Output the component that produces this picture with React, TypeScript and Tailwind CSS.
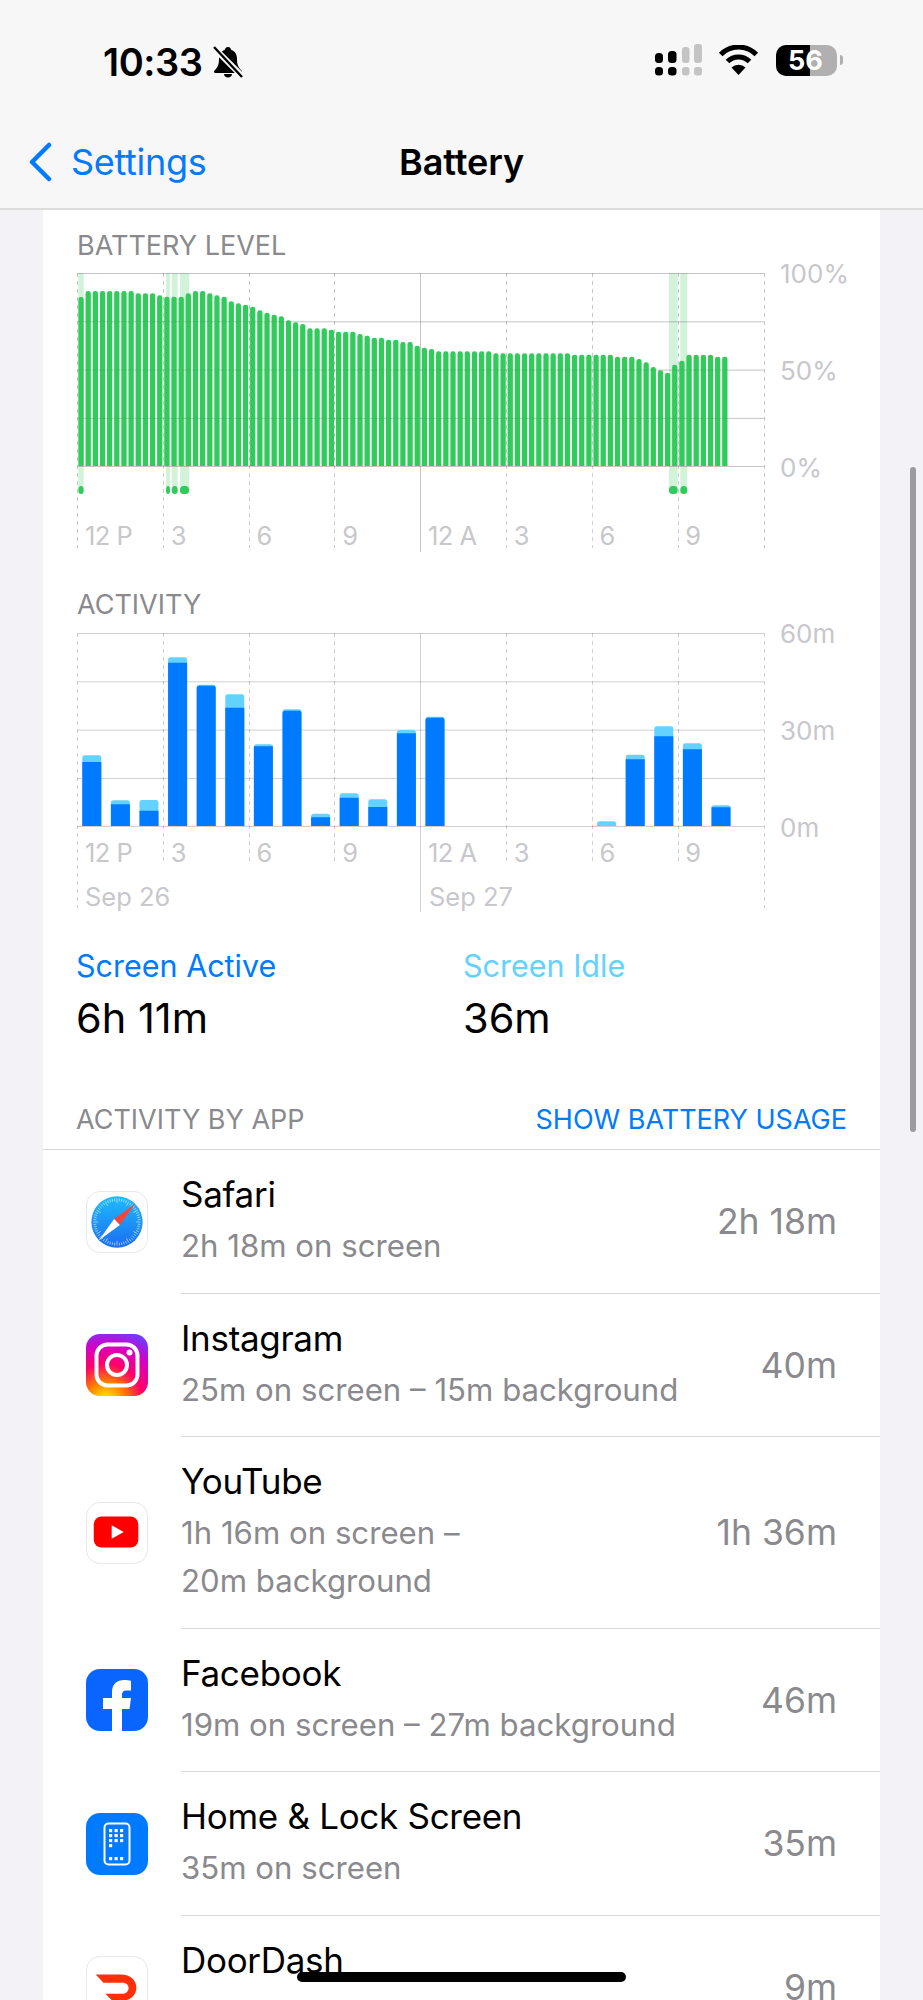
const SANS = "font-['Inter','Noto_Sans',sans-serif]";

const battTops = [
  230, 212, 212, 212, 212, 212, 212, 212, 219, 219, 219, 225, 229, 229, 229, 219, 212, 212, 219, 225, 229, 243, 249,
  253, 259, 270, 277, 283, 288, 300, 306, 311, 324, 324, 324, 328, 334, 334, 334, 341, 346, 352, 352, 358, 358, 365,
  365, 376, 382, 386, 393, 393, 393, 393, 393, 393, 393, 393, 399, 399, 399, 399, 399, 399, 399, 399, 399, 399, 399,
  403, 403, 403, 403, 403, 403, 409, 409, 409, 416, 426, 440, 450, 457, 433, 421, 403, 403, 403, 403, 409, 409,
];

const activity: [number, number, number][] = [
  [0, 525, 545],
  [1, 660, 672],
  [2, 659, 691],
  [3, 231, 247],
  [4, 313, 316],
  [5, 342, 382],
  [6, 492, 498],
  [7, 387, 391],
  [8, 700, 711],
  [9, 639, 652],
  [10, 657, 680],
  [11, 449, 459],
  [12, 409, 412],
  [18, 723, 738],
  [19, 523, 537],
  [20, 438, 468],
  [21, 489, 507],
  [22, 675, 681],
];

const bands = [
  [1.3, 6.7],
  [89, 93],
  [94.7, 100.7],
  [103, 112],
  [592, 600.7],
  [603.3, 610.3],
];

function topBar(x: number, y: number, w: number, h: number, r: number) {
  return `M${x} ${y + h}V${y + r}Q${x} ${y} ${x + r} ${y}H${x + w - r}Q${x + w} ${y} ${x + w} ${y + r}V${y + h}Z`;
}

function Grid({ dashEnd }: { dashEnd: number }) {
  const line = "rgba(60,60,67,0.24)";
  return (
    <g>
      {[0, 48.3, 96.6, 144.9, 193].map((y) => (
        <line key={y} x1="0.5" x2="687" y1={y + 0.5} y2={y + 0.5} stroke={line} strokeWidth="1" />
      ))}
      {[1, 2, 3, 5, 6, 7].map((i) => (
        <line
          key={i}
          x1={Math.round(i * 85.8) + 0.5}
          x2={Math.round(i * 85.8) + 0.5}
          y1="0"
          y2={dashEnd}
          stroke={line}
          strokeWidth="1"
          strokeDasharray="4 4"
        />
      ))}
      <line x1="687.5" x2="687.5" y1="0" y2="275" stroke={line} strokeWidth="1" strokeDasharray="4 4" />
      <line x1="0.5" x2="0.5" y1="0" y2="275" stroke={line} strokeWidth="1" strokeDasharray="4 4" />
      <line x1="343.5" x2="343.5" y1="0" y2="279" stroke={line} strokeWidth="1" />
    </g>
  );
}

function XLabels() {
  return (
    <div className="grid w-[686px] grid-cols-8 text-[25.5px] leading-[30px] text-[#c7c7cc]">
      <span className="pl-[8px] tracking-[-0.5px]">12 P</span>
      <span className="pl-[8px]">3</span>
      <span className="pl-[8px]">6</span>
      <span className="pl-[8px]">9</span>
      <span className="pl-[8px] tracking-[-0.5px]">12 A</span>
      <span className="pl-[8px]">3</span>
      <span className="pl-[8px]">6</span>
      <span className="pl-[8px]">9</span>
    </div>
  );
}

function YLabels({ labels }: { labels: string[] }) {
  return (
    <div className="absolute left-[703px] top-0 flex h-[194px] flex-col justify-between text-[26px] text-[#c7c7cc]">
      {labels.map((l) => (
        <span key={l} className="flex h-0 items-center">
          {l}
        </span>
      ))}
    </div>
  );
}

function BatteryChart() {
  return (
    <div className="relative h-[316px] w-full">
      <svg width="700" height="280" viewBox="0 0 700 280" className="absolute left-0 top-0">
        {bands.map(([a, b]) => (
          <rect key={a} x={a} y="0" width={b - a} height="214" fill="#d1f3da" />
        ))}
        <Grid dashEnd={275} />
        {battTops.map((t, i) => {
          const top = (t - 158) / 3;
          return <path key={i} d={topBar(1.4 + i * 7.153, top, 5.3, 193 - top, 2.4)} fill="#30cb5b" />;
        })}
        {bands.map(([a, b]) => (
          <rect key={a} x={a} y="213" width={b - a} height="8" rx="3.5" fill="#30cb5b" />
        ))}
        <g opacity="0.25">
          <Grid dashEnd={193} />
        </g>
      </svg>
      <YLabels labels={["100%", "50%", "0%"]} />
      <div className="absolute left-0 top-[248px]">
        <XLabels />
      </div>
    </div>
  );
}

function ActivityChart() {
  return (
    <div className="relative h-[312px] w-full">
      <svg width="700" height="280" viewBox="0 0 700 280" className="absolute left-0 top-0">
        <Grid dashEnd={232} />
        {activity.map(([i, light, dark]) => {
          const x = 5.3 + i * 28.6;
          const lt = (light - 158) / 3;
          const dt = (dark - 158) / 3;
          return (
            <g key={i}>
              <path d={topBar(x, lt, 19, 193 - lt, 2.5)} fill="#64d2ff" />
              {dt < 193 && <path d={topBar(x, dt, 19, 193 - dt, dark - light < 6 ? 2.5 : 0)} fill="#007aff" />}
            </g>
          );
        })}
      </svg>
      <YLabels labels={["60m", "30m", "0m"]} />
      <div className="absolute left-0 top-[205px]">
        <XLabels />
        <div className="mt-[14px] grid w-[686px] grid-cols-2 text-[25.5px] leading-[30px] text-[#c7c7cc]">
          <span className="pl-[8px]">Sep 26</span>
          <span className="pl-[9px]">Sep 27</span>
        </div>
      </div>
    </div>
  );
}

function SafariIcon() {
  const ticks = Array.from({ length: 60 }, (_, i) => i * 6);
  return (
    <div className="h-[62px] w-[62px] rounded-[14px] border border-[#e8e8ec] bg-white">
      <svg viewBox="0 0 62 62" width="60" height="60">
        <defs>
          <linearGradient id="saf" x1="0" y1="0" x2="0" y2="1">
            <stop offset="0" stopColor="#1ebcfd" />
            <stop offset="1" stopColor="#1b6df0" />
          </linearGradient>
        </defs>
        <circle cx="31" cy="31" r="26.5" fill="url(#saf)" />
        {ticks.map((a) => (
          <line
            key={a}
            x1="31"
            x2="31"
            y1="6.5"
            y2={a % 30 === 0 ? 11.5 : 9.5}
            stroke="#fff"
            strokeOpacity="0.75"
            strokeWidth="0.7"
            transform={`rotate(${a} 31 31)`}
          />
        ))}
        <polygon points="50,12 28,28 34,34" fill="#f5453c" />
        <polygon points="12,50 28,28 34,34" fill="#fff" />
      </svg>
    </div>
  );
}

function InstagramIcon() {
  return (
    <svg viewBox="0 0 62 62" width="62" height="62" className="block">
      <defs>
        <radialGradient id="ig" cx="0.32" cy="1.08" r="1.15">
          <stop offset="0.08" stopColor="#ffd600" />
          <stop offset="0.28" stopColor="#ff7a00" />
          <stop offset="0.52" stopColor="#ff0069" />
          <stop offset="0.78" stopColor="#d300c5" />
          <stop offset="1" stopColor="#7638fa" />
        </radialGradient>
      </defs>
      <rect width="62" height="62" rx="14" fill="url(#ig)" />
      <rect x="10.5" y="10.5" width="41" height="41" rx="11" fill="none" stroke="#fff" strokeWidth="4" />
      <circle cx="31" cy="31" r="10" fill="none" stroke="#fff" strokeWidth="4" />
      <circle cx="43.5" cy="18.5" r="3" fill="#fff" />
    </svg>
  );
}

function YoutubeIcon() {
  return (
    <div className="h-[62px] w-[62px] rounded-[14px] border border-[#e8e8ec] bg-white">
      <svg viewBox="0 0 62 62" width="60" height="60">
        <rect x="7" y="14" width="46" height="32" rx="8" fill="#ff0000" />
        <polygon points="25.5,23 38,30 25.5,37" fill="#fff" />
      </svg>
    </div>
  );
}

function FacebookIcon() {
  return (
    <svg viewBox="0 0 62 62" width="62" height="62" className="block">
      <rect width="62" height="62" rx="14" fill="#0866ff" />
      <path
        d="M26 62V40H17V29H26V23C26 15 31 11 38 11C40.500 11 43 11.300 45 11.800V21.500H40.500C37 21.500 36 23.500 36 26V29H45L43.500 40H36V62Z"
        fill="#fff"
      />
    </svg>
  );
}

function HomeIcon() {
  const dots = [0, 1, 2, 3].flatMap((r) => [0, 1, 2].map((c) => [c, r]));
  return (
    <svg viewBox="0 0 62 62" width="62" height="62" className="block">
      <rect width="62" height="62" rx="14" fill="#007aff" />
      <rect x="18.500" y="10.500" width="25" height="41" rx="4" fill="none" stroke="#fff" strokeWidth="2" />
      {dots
        .filter(([c, r]) => !(r === 3 && c > 0))
        .map(([c, r]) => (
          <rect key={`${c}${r}`} x={23 + c * 5.500} y={16 + r * 5} width="3.200" height="3.200" fill="#fff" />
        ))}
      {[0, 1, 2].map((c) => (
        <rect key={c} x={23 + c * 5.500} y="44" width="3.200" height="3.200" fill="#fff" />
      ))}
    </svg>
  );
}

function DoorDashIcon() {
  return (
    <div className="h-[62px] w-[62px] rounded-[14px] border border-[#e8e8ec] bg-white">
      <svg viewBox="0 0 62 62" width="60" height="60">
        <path
          d="M9 18H35C45 18 51 24 51 31.500C51 39 45 45 37 45H26L19 38H37C40.500 38 43 35 43 32C43 29 40.500 26.500 37 26.500H17Z"
          fill="#ff3008"
        />
      </svg>
    </div>
  );
}

const apps = [
  { name: "Safari", sub: ["2h 18m on screen"], total: "2h 18m", icon: <SafariIcon /> },
  { name: "Instagram", sub: ["25m on screen – 15m background"], total: "40m", icon: <InstagramIcon /> },
  { name: "YouTube", sub: ["1h 16m on screen –", "20m background"], total: "1h 36m", icon: <YoutubeIcon /> },
  { name: "Facebook", sub: ["19m on screen – 27m background"], total: "46m", icon: <FacebookIcon /> },
  { name: "Home & Lock Screen", sub: ["35m on screen"], total: "35m", icon: <HomeIcon /> },
  { name: "DoorDash", sub: ["4m on screen – 5m background"], total: "9m", icon: <DoorDashIcon /> },
];

function BellSlash() {
  return (
    <svg viewBox="0 0 30 32" width="30" height="32" className="block">
      <path
        d="M15 1C17 1 18 2.500 18.300 4C22.500 5.300 24 9 24 13C24 18 25 21 28.500 24.500C29.500 25.500 29 27 27.500 27H2.500C1 27 0.500 25.500 1.500 24.500C5 21 6 18 6 13C6 9 7.500 5.300 11.700 4C12 2.500 13 1 15 1Z"
        fill="#000"
      />
      <path d="M11 28H19C19 30 17.200 31.500 15 31.500C12.800 31.500 11 30 11 28Z" fill="#000" />
      <line x1="0" y1="1" x2="30" y2="31" stroke="#f7f7f7" strokeWidth="6" />
      <line x1="1" y1="1" x2="29" y2="31" stroke="#000" strokeWidth="2.400" />
    </svg>
  );
}

function StatusIcons() {
  return (
    <div className="flex items-center">
      <svg viewBox="0 0 47 32" width="47" height="32" className="block">
        <rect x="0" y="9" width="8" height="10" rx="3.500" fill="#000" />
        <rect x="13" y="7" width="8.500" height="12" rx="3.500" fill="#000" />
        <rect x="27" y="3" width="7.500" height="16" rx="3" fill="#c4c4c4" />
        <rect x="39" y="0" width="8" height="19" rx="3" fill="#c4c4c4" />
        <rect x="0" y="23" width="8" height="8.500" rx="3.500" fill="#000" />
        <rect x="13" y="23" width="8.500" height="8.500" rx="3.500" fill="#000" />
        <rect x="27" y="23" width="7.500" height="8.500" rx="3" fill="#c4c4c4" />
        <rect x="39" y="23" width="8" height="8.500" rx="3" fill="#c4c4c4" />
      </svg>
      <svg viewBox="0 0 41 30" width="41" height="30" className="ml-[16px] block">
        <path d="M2.700 9.500A25 25 0 0 1 38.300 9.500" fill="none" stroke="#000" strokeWidth="5" />
        <path d="M9.500 16.500A15.500 15.500 0 0 1 31.500 16.500" fill="none" stroke="#000" strokeWidth="5" />
        <path d="M20.500 30L13.500 22.500A10 10 0 0 1 27.500 22.500Z" fill="#000" />
      </svg>
      <div className="relative ml-[17px] h-[31px] w-[61px] overflow-hidden rounded-[10px] bg-[#b0b0b0]">
        <div className="h-full w-[34px] bg-black" />
        <span className="absolute inset-0 flex items-center justify-center pr-[2px] text-[27px] font-bold leading-none text-white">
          56
        </span>
      </div>
      <div className="ml-[3px] h-[10px] w-[3px] rounded-r-full bg-[#b0b0b0]" />
    </div>
  );
}

export default function App() {
  return (
    <div className={`relative h-[2000px] w-[923px] overflow-hidden bg-[#f2f2f7] ${SANS} text-black`}>
      <header className="h-[210px] border-b-2 border-[#dcdcdc] bg-[#f7f7f7]">
        <div className="flex h-[124px] items-start justify-between pt-[44px] pl-[103px] pr-[80px]">
          <div className="flex items-center gap-[10px]">
            <span className="text-[38px] font-semibold leading-[36px] tracking-[-0.4px]">10:33</span>
            <BellSlash />
          </div>
          <StatusIcons />
        </div>
        <div className="relative flex h-[76px] items-center justify-center">
          <div className="absolute left-[28px] top-[18px] flex items-center gap-[19px] text-[#007aff]">
            <svg viewBox="0 0 24 40" width="24" height="40" className="block">
              <path d="M21 3L4 20L21 37" fill="none" stroke="#007aff" strokeWidth="4.500" strokeLinecap="round" strokeLinejoin="round" />
            </svg>
            <span className="text-[36px] leading-[40px] tracking-[-0.3px]">Settings</span>
          </div>
          <span className="text-[36px] font-semibold leading-[40px] tracking-[-0.1px]">Battery</span>
        </div>
      </header>

      <main className="mx-[43px] w-[837px] bg-white">
        <div className="pl-[34px] pt-[20px]">
          <h2 className="mb-[11px] text-[27px] leading-[32px] text-[#8a8a8e]">BATTERY LEVEL</h2>
          <BatteryChart />
          <h2 className="mb-[12px] text-[27px] leading-[32px] text-[#8a8a8e]">ACTIVITY</h2>
          <ActivityChart />
        </div>

        <div className="flex pl-[33px] pt-[1px]">
          <div className="w-[387px]">
            <div className="text-[30.5px] leading-[40px] text-[#007aff]">Screen Active</div>
            <div className="mt-[9px] text-[41.5px] leading-[46px]">6h 11m</div>
          </div>
          <div>
            <div className="text-[30.5px] leading-[40px] text-[#64d2ff]">Screen Idle</div>
            <div className="mt-[9px] text-[41.5px] leading-[46px]">36m</div>
          </div>
        </div>

        <div className="flex items-center justify-between border-b border-[#d8d8dc] pl-[33px] pr-[33px] pt-[63px] pb-[13px] text-[27px] leading-[32px]">
          <span className="text-[#8a8a8e]">ACTIVITY BY APP</span>
          <span className="text-[#007aff]">SHOW BATTERY USAGE</span>
        </div>

        <ul>
          {apps.map((app, i) => (
            <li key={app.name} className="flex items-center">
              <div className="ml-[43px] mr-[33px] shrink-0">{app.icon}</div>
              <div
                className={`flex flex-1 items-center justify-between pr-[43px] pt-[24px] pb-[22.5px] ${
                  i < apps.length - 1 ? "border-b border-[#d8d8dc]" : ""
                }`}
              >
                <div>
                  <div className="text-[35px] leading-[40px] tracking-[-0.3px]">{app.name}</div>
                  <div className="mt-[8px] text-[31.2px] leading-[48px] text-[#8a8a8e]">
                    {app.sub.map((s) => (
                      <div key={s}>{s}</div>
                    ))}
                  </div>
                </div>
                <span className="text-[35.5px] text-[#8a8a8e]">{app.total}</span>
              </div>
            </li>
          ))}
        </ul>
      </main>

      <div className="absolute left-[910px] top-[467px] h-[665px] w-[6px] rounded-full bg-[#9c9ca0]" />
      <div className="absolute left-[297px] top-[1972px] h-[10px] w-[329px] rounded-full bg-black" />
    </div>
  );
}
